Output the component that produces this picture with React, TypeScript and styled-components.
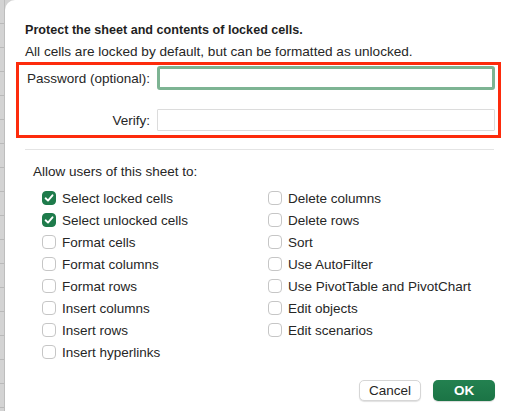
import styled, { createGlobalStyle } from 'styled-components';

const GlobalStyle = createGlobalStyle`
    html, body {
        margin: 0;
        padding: 0;
        background: #d3d3d3;
    }
    body {
        font-family: "Liberation Sans", Arial, sans-serif;
        color: #262626;
        -webkit-font-smoothing: antialiased;
    }
`;

const leftItems = [
    { label: 'Select locked cells', checked: true },
    { label: 'Select unlocked cells', checked: true },
    { label: 'Format cells', checked: false },
    { label: 'Format columns', checked: false },
    { label: 'Format rows', checked: false },
    { label: 'Insert columns', checked: false },
    { label: 'Insert rows', checked: false },
    { label: 'Insert hyperlinks', checked: false },
];

const rightItems = [
    { label: 'Delete columns', checked: false },
    { label: 'Delete rows', checked: false },
    { label: 'Sort', checked: false },
    { label: 'Use AutoFilter', checked: false },
    { label: 'Use PivotTable and PivotChart', checked: false },
    { label: 'Edit objects', checked: false },
    { label: 'Edit scenarios', checked: false },
];

const CheckOption = ({ label, checked }: { label: string; checked: boolean }) => (
    <OptionRow>
        <Box $checked={checked}>
            {checked && (
                <svg width="10" height="10" viewBox="0 0 10 10">
                    <path
                        d="M1.6 5.3 L4 7.6 L8.5 2.3"
                        fill="none"
                        stroke="#fff"
                        strokeWidth="1.9"
                        strokeLinecap="round"
                        strokeLinejoin="round"
                    />
                </svg>
            )}
        </Box>
        <span>{label}</span>
    </OptionRow>
);

const App = () => {
    return (
        <>
            <GlobalStyle />
            <Page>
                <SheetStrip />
                <Dialog>
                    <Heading>
                        <Title>Protect the sheet and contents of locked cells.</Title>
                        <Subtitle>All cells are locked by default, but can be formatted as unlocked.</Subtitle>
                    </Heading>
                    <Highlight>
                        <FieldLabel>Password (optional):</FieldLabel>
                        <TextInput type="password" $focused />
                        <FieldLabel>Verify:</FieldLabel>
                        <TextInput type="password" />
                    </Highlight>
                    <Separator />
                    <AllowTitle>Allow users of this sheet to:</AllowTitle>
                    <Options>
                        <Column>
                            {leftItems.map((item) => (
                                <CheckOption key={item.label} {...item} />
                            ))}
                        </Column>
                        <Column>
                            {rightItems.map((item) => (
                                <CheckOption key={item.label} {...item} />
                            ))}
                        </Column>
                    </Options>
                    <Footer>
                        <Button>Cancel</Button>
                        <Button $primary>OK</Button>
                    </Footer>
                </Dialog>
            </Page>
        </>
    );
};

const Page = styled.div`
    display: flex;
    width: 510px;
    height: 411px;
    overflow: hidden;
`;

const SheetStrip = styled.div`
    width: 5px;
    flex-shrink: 0;
    background-color: #d3d3d3;
    background-image: repeating-linear-gradient(
        to bottom,
        transparent 0,
        transparent 23px,
        #b9b9b9 23px,
        #b9b9b9 24px
    );
    border-right: 1px solid #bdbdbd;
    box-sizing: border-box;
`;

const Dialog = styled.div`
    flex: 1;
    background: #ffffff;
    border-top-left-radius: 10px;
    display: flex;
    flex-direction: column;
`;

const Heading = styled.div`
    padding: 21px 0 0 20px;
`;

const Title = styled.div`
    font-size: 12.6px;
    font-weight: bold;
    line-height: 18px;
    color: #1f1f1f;
`;

const Subtitle = styled.div`
    margin-top: 4px;
    font-size: 13.6px;
    line-height: 18px;
`;

const Highlight = styled.div`
    margin: 1px 9px 0 11px;
    border: 3px solid #fd2b0c;
    padding: 1px 3px 4px 0;
    display: grid;
    grid-template-columns: 131px 1fr;
    grid-template-rows: 24px 22px;
    column-gap: 7px;
    row-gap: 19px;
    align-items: center;
`;

const FieldLabel = styled.label`
    font-size: 13.5px;
    text-align: right;
    white-space: nowrap;
`;

const TextInput = styled.input<{ $focused?: boolean }>`
    box-sizing: border-box;
    width: 100%;
    height: 100%;
    margin: 0;
    padding: 0 6px;
    font: inherit;
    background: #fff;
    outline: none;
    border-radius: ${({ $focused }) => ($focused ? '3px' : '1px')};
    border: ${({ $focused }) => ($focused ? '3px solid #7db493' : '1px solid #dcdcdc')};
`;

const Separator = styled.div`
    height: 1px;
    background: #e4e4e4;
    margin: 11px 16px 0 20px;
`;

const AllowTitle = styled.div`
    margin: 14px 0 0 28px;
    font-size: 13.5px;
    line-height: 16px;
`;

const Options = styled.div`
    display: grid;
    grid-template-columns: 226px 1fr;
    margin: 7px 0 0 37px;
`;

const Column = styled.div`
    display: flex;
    flex-direction: column;
`;

const OptionRow = styled.div`
    display: flex;
    align-items: center;
    gap: 6px;
    height: 22px;
    font-size: 13.5px;
    white-space: nowrap;
`;

const Box = styled.span<{ $checked: boolean }>`
    box-sizing: border-box;
    width: 14px;
    height: 14px;
    flex-shrink: 0;
    border-radius: 4px;
    display: flex;
    align-items: center;
    justify-content: center;
    background: ${({ $checked }) => ($checked ? '#1e7b4b' : '#ffffff')};
    border: 1px solid ${({ $checked }) => ($checked ? '#1e7b4b' : '#c6c6c6')};
`;

const Footer = styled.div`
    display: flex;
    justify-content: flex-end;
    gap: 12px;
    margin-top: 17px;
    padding-right: 15px;
`;

const Button = styled.button<{ $primary?: boolean }>`
    box-sizing: border-box;
    width: 62px;
    height: 21px;
    padding: 0;
    border-radius: 5px;
    font-family: inherit;
    font-size: 13.5px;
    font-weight: ${({ $primary }) => ($primary ? 'bold' : 'normal')};
    color: ${({ $primary }) => ($primary ? '#ffffff' : '#262626')};
    background: ${({ $primary }) => ($primary ? 'linear-gradient(#238150, #1b7445)' : '#ffffff')};
    border: ${({ $primary }) => ($primary ? 'none' : '1px solid #d6d6d6')};
    box-shadow: ${({ $primary }) =>
        $primary ? '0 1px 1px rgba(0, 0, 0, 0.15)' : '0 1px 1px rgba(0, 0, 0, 0.12)'};
`;

export default App;
